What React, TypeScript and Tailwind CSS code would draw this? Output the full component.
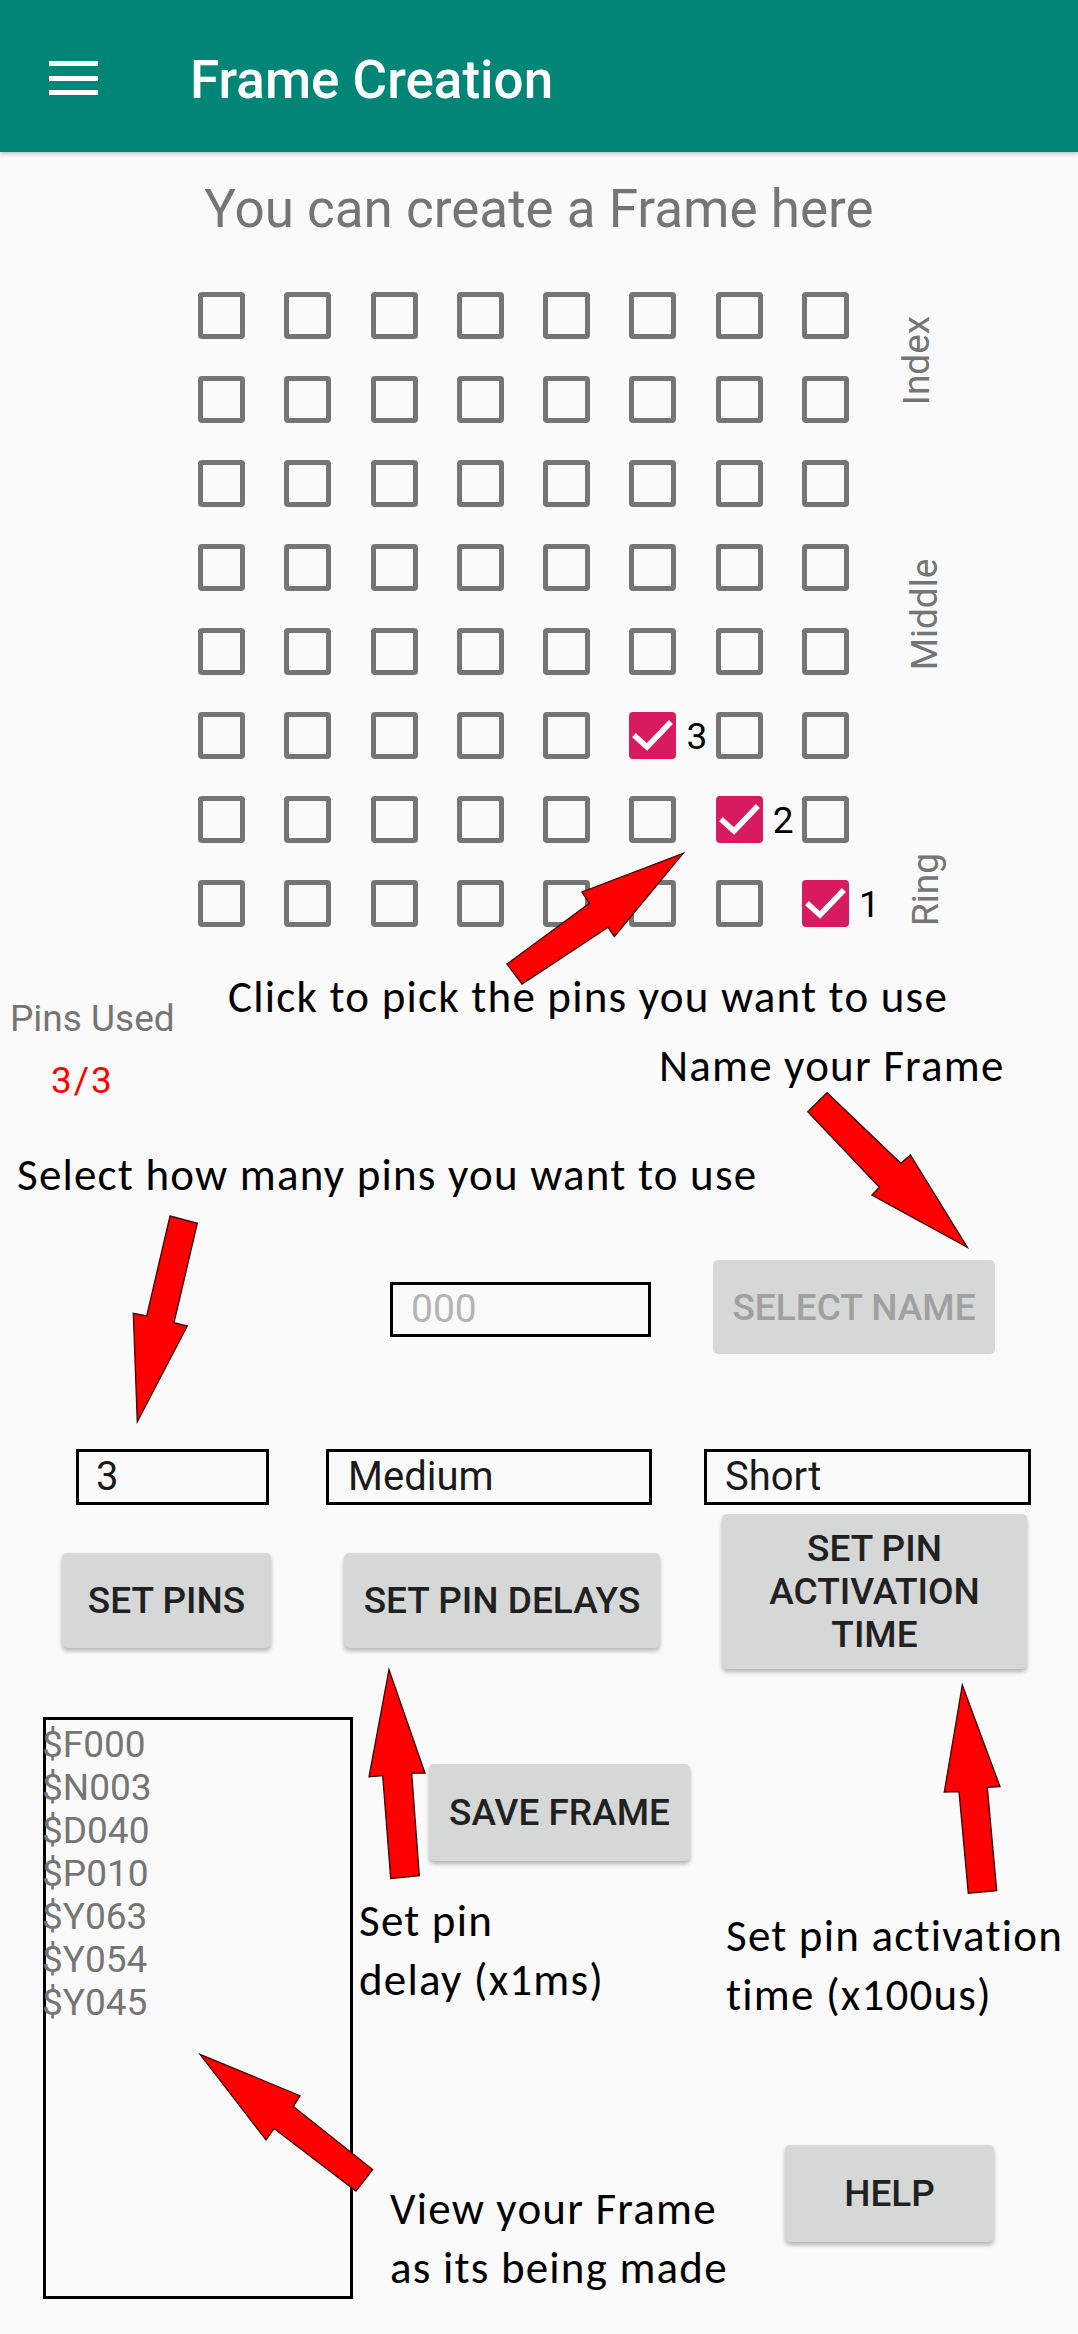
import React from "react";

const roboto = "[font-family:Roboto,'Noto_Sans',sans-serif]";
const annot = "[font-family:Carlito,Lato,sans-serif] text-[45px] tracking-[1.2px] text-black whitespace-nowrap";

const checked: Record<string, string> = { "5-5": "3", "6-6": "2", "7-7": "1" };

function Check({ label }: { label?: string }) {
  if (label) {
    return (
      <div className="relative w-[47px] h-[47px]">
        <div className="w-[47px] h-[47px] rounded-[4px] bg-[#d81b60] flex items-center justify-center">
          <svg width="47" height="47" viewBox="0 0 47 47">
            <polyline points="7,25 18,35 40,12" fill="none" stroke="#ffffff" strokeWidth="5.5" strokeLinecap="square" />
          </svg>
        </div>
        <span className={`${roboto} absolute left-[57px] top-[1px] text-[37px] leading-[47px] text-black`}>{label}</span>
      </div>
    );
  }
  return <div className="w-[47px] h-[47px] rounded-[4px] border-[5px] border-[#757575]" />;
}

function Btn({ children, className, disabled }: { children: React.ReactNode; className: string; disabled?: boolean }) {
  return (
    <div
      className={`${roboto} ${className} rounded-[5px] bg-[#d6d7d7] flex items-center justify-center text-center font-medium text-[37px] leading-[43px] ${
        disabled ? "text-[#a0a0a0]" : "text-[#212121] shadow-[0_3px_4px_rgba(0,0,0,0.28)]"
      }`}
    >
      {children}
    </div>
  );
}

function Arrows() {
  const arrows = [
    "683.2,853.3 581.9,892 589.5,903.3 506.9,964 522,984 608.1,927.3 614.3,936.7",
    "827.1,1092.7 900.8,1163.3 910.4,1155 967.3,1247.3 871.9,1195 879.4,1187.3 807.8,1111.7",
    "170,1216 197.3,1223.3 174,1322.7 187.3,1326 137.3,1421.7 133.3,1313.3 146.7,1316",
    "389,1669.6 425,1773.2 411.7,1773.2 419.3,1875.7 390.7,1878.6 382.7,1775.7 369,1776.8",
    "962.3,1685 1000,1786.7 987.3,1787.3 996.7,1890.7 968.3,1893.3 959,1791.7 944.3,1792",
    "200,2054.3 300,2095.7 293.3,2106.4 372.7,2169.6 356,2191.1 274,2128.6 266,2140",
  ];
  return (
    <svg className="absolute left-0 top-0 pointer-events-none" width="1078" height="2334" viewBox="0 0 1078 2334">
      {arrows.map((p, i) => (
        <polygon key={i} points={p} fill="#ff0000" stroke="#3a0000" strokeWidth="1.3" strokeLinejoin="miter" />
      ))}
    </svg>
  );
}

export default function App() {
  const frameLines = ["$F000", "$N003", "$D040", "$P010", "$Y063", "$Y054", "$Y045"];
  return (
    <div className="relative w-[1078px] h-[2334px] bg-[#fafafa] overflow-hidden">
      {/* App bar */}
      <div className="relative z-10 h-[152px] bg-[#008577] flex items-start shadow-[0_2px_4px_rgba(0,0,0,0.22)]">
        <svg className="ml-[49px] mt-[61px]" width="49" height="35" viewBox="0 0 49 35">
          <rect x="0" y="0" width="49" height="5" fill="#fff" />
          <rect x="0" y="15" width="49" height="5" fill="#fff" />
          <rect x="0" y="29" width="49" height="5" fill="#fff" />
        </svg>
        <div className={`${roboto} ml-[92px] mt-[49px] text-[53px] leading-[62px] font-medium text-white`}>Frame Creation</div>
      </div>

      {/* Subtitle */}
      <div className={`${roboto} mt-[27px] text-center text-[53px] leading-[61px] text-[#757575]`}>You can create a Frame here</div>

      {/* Grid + finger labels */}
      <div className="mt-[52px] flex items-start pl-[198px]">
        <div className="grid grid-cols-[repeat(8,47px)] gap-x-[39.3px] gap-y-[37px]">
          {Array.from({ length: 64 }).map((_, i) => {
            const r = Math.floor(i / 8);
            const c = i % 8;
            return <Check key={i} label={checked[`${r}-${c}`]} />;
          })}
        </div>
        <div className={`${roboto} ml-[50px] w-[44px] flex flex-col text-[37px] leading-[43px] text-[#757575]`}>
          <div className="mt-[38px] h-[60px] pr-[8px] flex items-center justify-center">
            <span className="-rotate-90 whitespace-nowrap">Index</span>
          </div>
          <div className="mt-[194px] h-[60px] pl-[8px] flex items-center justify-center">
            <span className="-rotate-90 whitespace-nowrap">Middle</span>
          </div>
          <div className="mt-[215px] h-[60px] pl-[8px] flex items-center justify-center">
            <span className="-rotate-90 whitespace-nowrap">Ring</span>
          </div>
        </div>
      </div>

      {/* Pins used + annotations */}
      <div className="h-[224px] flex">
        <div className={`${roboto} w-[228px] pt-[70px] pl-[10px] text-[37px] leading-[43px]`}>
          <div className="text-[#757575] whitespace-nowrap">Pins Used</div>
          <div className="mt-[19px] pl-[41px] text-[#ff0000] tracking-[2px]">3/3</div>
        </div>
        <div className="pt-[46px] flex flex-col">
          <div className={`${annot} leading-[48px]`}>Click to pick the pins you want to use</div>
          <div className={`${annot} leading-[48px] mt-[21px] pl-[431px]`}>Name your Frame</div>
        </div>
      </div>
      <div className={`${annot} leading-[48px] pl-[17px]`}>Select how many pins you want to use</div>

      {/* Name row */}
      <div className="mt-[61px] flex items-start">
        <div className={`${roboto} ml-[390px] mt-[22px] w-[261px] h-[55px] border-[3px] border-black flex items-center pl-[18px] text-[39px] text-[#b4b4b4]`}>000</div>
        <Btn className="ml-[62px] w-[282px] h-[94px]" disabled>SELECT NAME</Btn>
      </div>

      {/* Inputs row */}
      <div className={`${roboto} mt-[95px] flex text-[40px] text-[#1a1a1a]`}>
        <div className="ml-[76px] w-[193px] h-[56px] border-[3px] border-black flex items-center pl-[17px]">3</div>
        <div className="ml-[57px] w-[326px] h-[56px] border-[3px] border-black flex items-center pl-[19px]">Medium</div>
        <div className="ml-[52px] w-[327px] h-[56px] border-[3px] border-black flex items-center pl-[18px]">Short</div>
      </div>

      {/* Buttons row */}
      <div className="mt-[9px] flex items-start">
        <Btn className="ml-[62px] mt-[39px] w-[209px] h-[95px]">SET PINS</Btn>
        <Btn className="ml-[73px] mt-[39px] w-[316px] h-[95px]">SET PIN DELAYS</Btn>
        <Btn className="ml-[62px] w-[305px] h-[155px]">
          SET PIN
          <br />
          ACTIVATION
          <br />
          TIME
        </Btn>
      </div>

      {/* Bottom section */}
      <div className="flex items-start">
        <div className="w-[353px] pl-[43px]">
          <div className={`${roboto} mt-[48px] w-[310px] h-[582px] border-[3px] border-black pt-[3px] text-[37px] leading-[43px] text-[#757575]`}>
            {frameLines.map((l) => (
              <div key={l} className="-ml-[4px]">{l}</div>
            ))}
          </div>
        </div>
        <div className="w-[372px] flex flex-col items-start">
          <Btn className="ml-[76px] mt-[95px] w-[261px] h-[97px]">SAVE FRAME</Btn>
          <div className={`${annot} leading-[58.5px] mt-[31px] ml-[6px]`}>
            Set pin
            <br />
            delay (x1ms)
          </div>
          <div className={`${annot} leading-[58.5px] mt-[171px] ml-[37px]`}>
            View your Frame
            <br />
            as its being made
          </div>
        </div>
        <div className="flex-1 flex flex-col items-start">
          <div className={`${annot} leading-[58.5px] mt-[238px] ml-[1px]`}>
            Set pin activation
            <br />
            time (x100us)
          </div>
          <Btn className="ml-[60px] mt-[121px] w-[209px] h-[97px]">HELP</Btn>
        </div>
      </div>

      <Arrows />
    </div>
  );
}
